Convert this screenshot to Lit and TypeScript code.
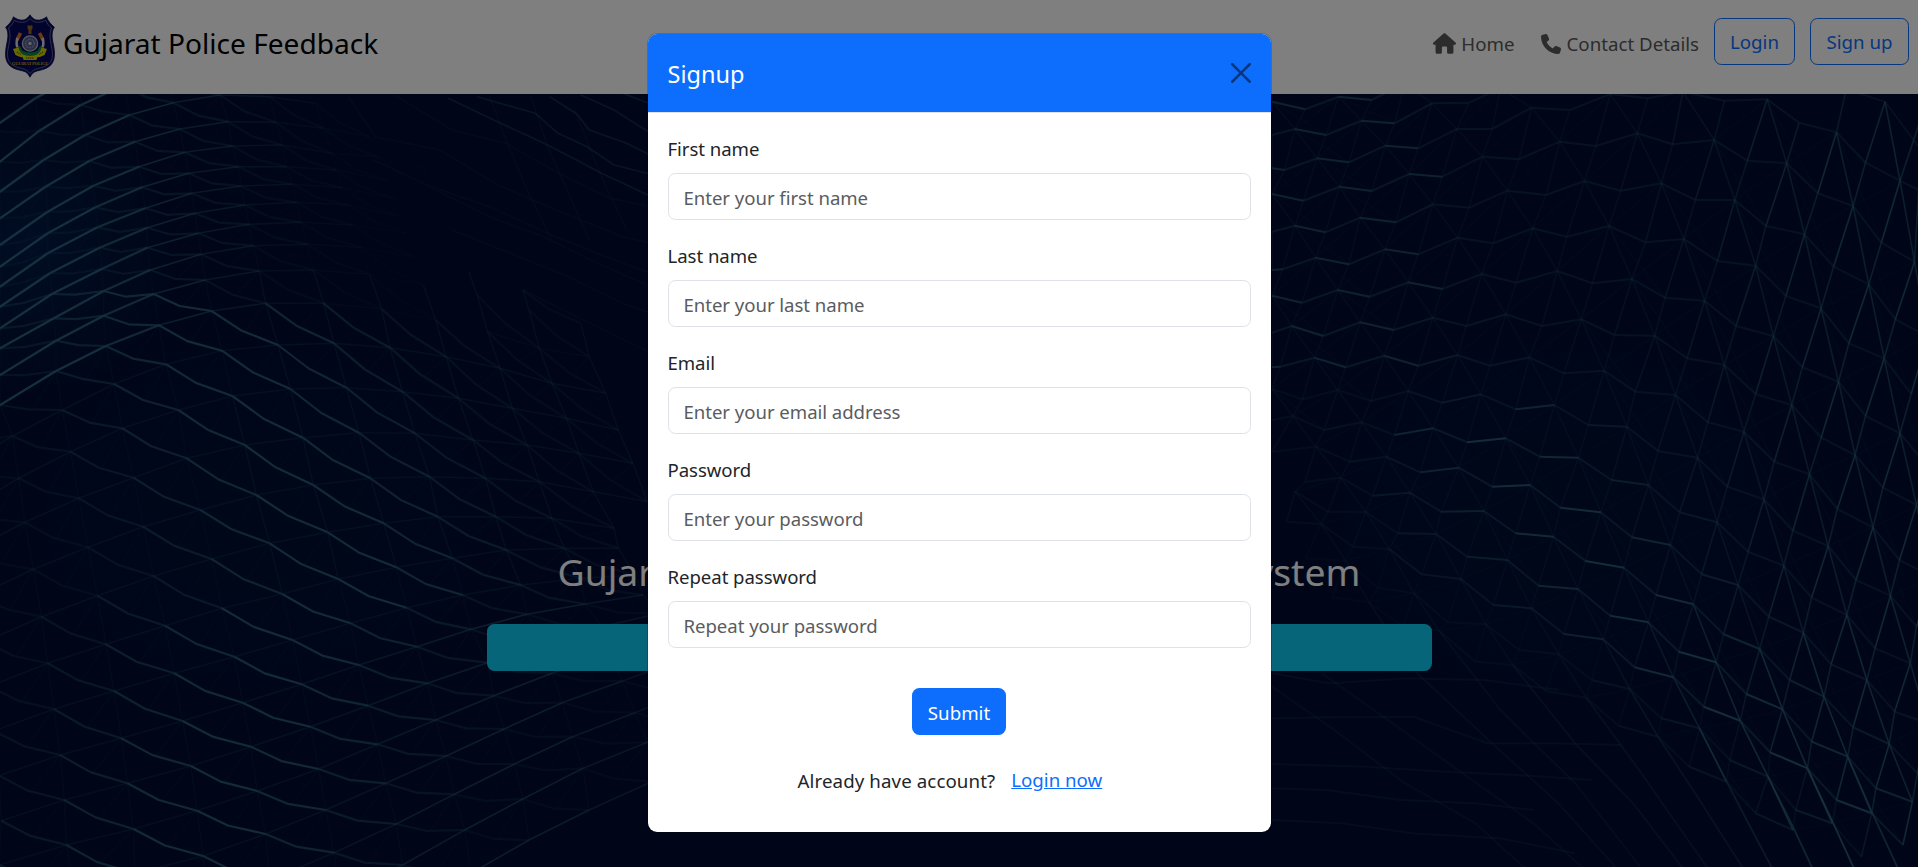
import { LitElement, html, svg, css } from "lit";
import { customElement, property } from "lit/decorators.js";

type Pt = [number, number];

/* Mesh vertices are written in a compact grid unit: 2.41 per px across, 3 per px down. */
const U = 2.41;
const V = 3;
const pairs = (s: string): Pt[] =>
  s.trim().split(/\s+/).map((p) => p.split(",").map(Number) as Pt);

const ARCS: Pt[][] = [
  "-25,120 85,25 190,-45 290,-95",
  "0,215 95,122 195,45 300,-15 405,-40",
  "0,305 105,210 205,135 312,75 418,38 530,15 650,20 760,40",
  "0,385 110,290 215,213 325,155 433,117 550,95 665,97 780,115 890,140 1010,180",
  "0,465 115,365 225,287 335,230 445,187 560,168 680,165 800,190 910,200 1030,240",
  "0,530 115,430 230,352 342,292 455,250 575,230 690,230 810,240 930,270 1050,300",
  "0,590 115,490 235,412 350,355 462,310 580,288 705,283 825,293 950,325 1070,360",
  "0,650 120,550 240,473 355,413 470,370 590,345 715,337 840,345 965,380 1090,420",
  "0,715 125,612 245,537 355,473 478,430 600,403 725,397 850,405 980,430 1110,480",
  "0,775 130,685 250,603 362,540 485,493 610,467 740,463 870,472 1000,500 1130,545 1260,600",
  "0,855 135,752 250,677 370,612 495,570 625,543 755,540 890,553 1020,585 1150,615 1275,660 1400,700",
  "0,945 135,843 255,768 383,706 510,663 640,640 780,640 920,657 1050,690 1175,725 1300,775 1420,800",
  "30,1038 150,960 275,882 400,823 535,782 670,765 805,760 940,773 1075,800 1205,835 1330,880 1460,910",
  "45,1165 170,1085 295,1015 430,960 560,918 700,897 835,893 970,905 1105,925 1235,955 1365,985 1490,1020",
  "60,1297 190,1225 322,1163 450,1105 590,1065 730,1043 865,1028 1000,1030 1140,1050 1270,1065 1395,1090 1525,1120",
  "80,1438 212,1372 345,1310 483,1260 618,1215 755,1185 893,1165 1035,1160 1170,1165 1300,1175 1430,1205 1560,1235",
  "100,1580 235,1517 370,1458 510,1407 650,1360 790,1327 925,1300 1055,1280 1195,1280 1330,1285 1480,1315",
  "115,1720 255,1663 398,1607 535,1555 680,1512 815,1467 955,1432 1090,1405 1220,1380 1360,1375 1490,1375",
  "130,1857 275,1803 420,1750 565,1700 705,1650 845,1600 980,1553 1115,1515 1255,1485 1400,1465 1530,1455",
  "145,1995 292,1945 440,1893 585,1838 727,1783 865,1725 1005,1670 1135,1618 1270,1573 1410,1542 1550,1515",
  "155,2130 307,2080 460,2028 605,1970 748,1910 887,1847 1030,1780 1175,1718 1310,1660 1450,1610 1590,1570",
  "160,2265 322,2217 475,2162 620,2103 768,2037 910,1963 1050,1890 1190,1817 1330,1750 1470,1690 1610,1640",
  "180,2400 325,2350 490,2298 640,2232 785,2160 930,2080 1075,1998 1215,1917 1355,1838 1500,1773 1640,1710",
  "190,2520 340,2480 500,2430 650,2370 805,2288 955,2202 1095,2113 1240,2022 1380,1940 1530,1868 1670,1800",
  "200,2660 350,2610 510,2560 660,2500 820,2420 970,2325 1120,2220 1260,2127 1405,2035 1560,1957 1700,1900",
  "210,2790 360,2740 520,2690 680,2630 835,2540 985,2440 1135,2350 1275,2250 1420,2160 1570,2075 1720,2010",
].map(pairs).map((a) => {
  const [p, q] = a;
  return [[2 * p[0] - q[0], 2 * p[1] - q[1] + 12] as Pt, ...a];
});

/* Ridge rows; the digit tells which parity of vertex is a crest. */
const ROWS: [number, Pt[]][] = ([
  [0, "10,35 90,58 170,20 250,30 330,-20"],
  [1, "10,135 65,117 140,135 225,92 305,100 395,40 485,38 560,-5"],
  [0, "10,235 40,240 118,205 195,217 283,167 362,175 455,117 540,117 635,53 728,60 825,12 915,25 1000,5 1100,32 1203,28 1280,98 1370,127 1440,218 1523,272 1568,300"],
  [0, "10,312 85,332 172,290 250,303 340,252 420,260 517,200 605,208 703,155 790,168 890,130 975,163 1075,150 1155,212 1250,220 1325,310 1410,348 1478,458 1558,515"],
  [1, "10,425 65,407 138,427 222,383 308,397 397,343 485,353 577,302 670,315 763,273 850,302 948,280 1030,330 1125,330 1200,408 1293,433 1363,530 1448,583 1512,688 1590,740"],
  [0, "10,540 35,538 115,503 195,523 282,478 362,493 457,443 543,460 638,415 720,440 822,408 910,457 1002,447 1083,513 1175,527 1248,618 1333,655 1400,760 1485,805 1550,912"],
  [0, "10,617 82,638 168,600 245,620 338,577 420,597 515,552 598,578 697,543 782,580 877,567 957,623 1052,632 1128,708 1218,738 1288,832 1375,875 1440,978 1523,1030 1590,1130"],
  [1, "10,728 57,708 133,738 222,697 303,720 397,683 478,708 573,673 660,708 755,688 835,735 932,737 1010,805 1100,825 1175,912 1262,945 1333,1043 1415,1095 1482,1193 1563,1245"],
  [0, "10,832 30,830 112,803 187,832 280,797 362,827 457,795 535,827 630,802 713,850 810,842 885,905 982,915 1060,997 1147,1025 1220,1115 1305,1153 1372,1257 1458,1312 1522,1410 1600,1460"],
  [0, "10,897 83,928 168,900 248,933 338,903 420,938 513,913 597,958 690,945 772,1005 865,1010 940,1083 1035,1103 1107,1190 1195,1228 1265,1322 1350,1368 1417,1470 1500,1517 1563,1610"],
  [1, "10,990 60,978 135,1020 225,997 305,1035 398,1015 480,1057 573,1045 655,1100 748,1103 828,1170 917,1185 992,1267 1082,1297 1157,1385 1243,1427 1310,1523 1395,1575 1463,1675 1548,1720"],
  [1, "10,1085 115,1070 197,1115 285,1100 367,1147 460,1133 540,1190 632,1185 705,1253 802,1267 877,1342 970,1365 1045,1453 1133,1485 1207,1580 1290,1628 1357,1723 1443,1770 1510,1865 1590,1900"],
  [1, "90,1175 175,1163 252,1217 342,1208 417,1265 520,1263 597,1330 688,1340 765,1413 858,1433 935,1515 1025,1543 1098,1633 1185,1677 1257,1770 1340,1820 1410,1912 1497,1962 1565,2050"],
  [0, "65,1205 145,1265 235,1265 313,1330 405,1332 480,1400 577,1410 652,1487 747,1497 825,1577 917,1597 990,1685 1080,1717 1153,1812 1240,1858 1310,1955 1397,2000 1465,2095 1553,2135"],
  [1, "45,1295 128,1302 205,1370 292,1377 370,1453 465,1467 543,1545 635,1555 713,1632 808,1648 883,1732 977,1762 1050,1850 1138,1892 1210,1987 1300,2035 1370,2130 1455,2170 1530,2265"],
  [1, "90,1405 187,1412 265,1493 352,1510 432,1597 525,1603 605,1680 700,1692 780,1770 872,1797 948,1885 1040,1915 1113,2010 1205,2060 1272,2160 1360,2200 1430,2300"],
  [1, "155,1522 243,1537 325,1610 412,1622 500,1715 590,1725 670,1803 767,1823 845,1907 940,1940 1015,2030 1105,2075 1175,2170 1265,2220"],
] as [number, string][]).map(([k, s]) => [k, pairs(s)]);

const EXTRA_LEFT = [
  "1325,20 1390,72 1420,120 1510,160 1575,200",
  "1150,20 1290,70 1345,130 1415,170 1480,225 1575,255",
  "1400,15 1480,60 1575,135",
  "1080,25 1190,90 1320,165 1450,250 1570,320",
  "1500,10 1575,45",
].map(pairs);

const FAINT_LEFT = [
  "950,15 1090,120 1220,160 1340,245 1470,325 1570,350",
  "840,20 905,140 1060,180 1200,285 1340,360 1500,440 1570,460",
  "1180,20 1220,150 1270,300 1330,450",
  "1280,20 1320,170 1370,310 1420,450",
  "1385,60 1420,170 1460,290 1510,420",
  "900,210 1040,290 1180,350 1320,430 1460,500 1570,550",
  "1050,300 1180,380 1310,440 1440,520 1570,590",
  "1090,420 1230,490 1370,560 1500,640 1570,670",
  "1260,600 1390,680 1520,760 1570,790",
].map(pairs);

const EXTRA_RIGHT: [number, Pt[]][] = ([
  [0.5, "1040,1915 1120,2110 1215,2335"],
  [0.8, "1205,2060 1265,2210 1312,2335"],
  [1, "1300,2035 1355,2180 1412,2335"],
  [0.75, "1397,2000 1455,2165 1518,2335"],
  [0.3, "940,1940 1040,2130 1145,2335"],
  [0.25, "767,1823 900,2050 1060,2335"],
  [0.25, "590,1725 740,1960 880,2140 1000,2335"],
  [0.2, "412,1622 560,1860 740,2080 900,2335"],
  [0.2, "243,1537 360,1750 540,1960 700,2140 840,2335"],
  [0.18, "130,1750 300,1900 480,2060 640,2200 760,2335"],
  [0.18, "10,1790 160,1920 330,2080 500,2200 620,2335"],
  [0.2, "10,1750 150,1780 330,1765 520,1770 700,1800"],
  [0.2, "10,1885 130,1882 350,1880 530,1960 700,1960 850,1965"],
  [0.2, "10,2022 230,2030 420,2045 600,2055 780,2070"],
  [0.2, "10,2095 140,2100 320,2130 500,2140 640,2160"],
  [0.2, "10,2190 180,2200 350,2230 560,2245 740,2290"],
] as [number, string][]).map(([k, s]) => [k, pairs(s)]);

const bump = (d: number, w: number) => Math.exp(-(d * d) / (w * w));
const seg = (pts: Pt[], ox: number, o: number, w = 1.5) => {
  if (o < 0.02) return null;
  const d = pts.map(([x, y], i) => `${i ? "L" : "M"}${(ox + x / U).toFixed(1)} ${(y / V - 4).toFixed(1)}`).join("");
  return svg`<path d=${d} stroke-width=${w} stroke-opacity=${Math.min(o, 1).toFixed(2)}></path>`;
};

const leftMesh = () => {
  const out: unknown[] = [];
  ARCS.forEach((a, r) => {
    for (let i = 0; i < a.length; i++) {
      const [x, y] = a[i];
      const n = a[i + 1];
      const upper = r < 12;
      const dim = y < 700 ? bump(Math.max(0, x - 450), 420) : 1;
      if (n) {
        const fade = upper
          ? 0.85 * bump(Math.max(0, x - 60), 400) + 0.1 * dim
          : 0.2 + 0.32 * bump(x - 1150, 330) * (r > 18 ? 1 : 0);
        out.push(seg([a[i], n], 0, fade, upper && x < 300 ? 2.3 : 1.6));
      }
      const b = ARCS[r + 1];
      if (b && b[i + 1]) {
        const q = b[i + 1];
        const mid: Pt = [x + (q[0] - x) * 0.45, y + (q[1] - y) * 0.45 + (upper && x < 200 ? 6 : 13)];
        const ridge = 470 + (y - 750) * 0.42;
        const o = upper && y < 600
          ? (0.12 + 0.2 * bump(x - 330, 230)) * dim
          : 0.12 + 0.72 * bump(x - (y > 1500 ? 620 - (y - 1500) * 0.3 : ridge), 420);
        out.push(seg([a[i], mid, q], 0, o, 2.2));
      }
      if (b && b[i]) out.push(seg([a[i], b[i]], 0, x > 550 && y < 1400 && y > 500 ? 0.2 : 0.1 * dim, 1.4));
      if (b && b[i + 1] && n) {
        const q = b[i + 1];
        out.push(seg([[(x + q[0]) / 2, (y + q[1]) / 2 + 10], n], 0, 0.07 * dim, 1.3));
      }
    }
  });
  EXTRA_LEFT.forEach((l) => out.push(seg(l, 0, 0.34, 1.7)));
  FAINT_LEFT.forEach((l) => out.push(seg(l, 0, 0.11, 1.6)));
  return out;
};

const link = (a: Pt[], pa: number, b: Pt[], pb: number, dx: (y: number) => number, o: (p: Pt) => number) =>
  a.map((p, i) => {
    if (i % 2 !== pa) return null;
    let best: Pt | null = null;
    b.forEach((q, j) => {
      if (j % 2 !== pb) return;
      const e = Math.abs(q[0] - p[0] - dx(p[1]));
      if (e < 32 && (!best || e < Math.abs(best[0] - p[0] - dx(p[1])))) best = q;
    });
    return best ? seg([p, best], 1268, o(p), 1.6) : null;
  });

const rightMesh = () => {
  const out: unknown[] = [];
  ROWS.forEach(([k, row], r) => {
    row.forEach((p, i) => {
      const n = row[i + 1];
      if (!n) return;
      const flat = i % 2 === k;
      const early = p[0] < 350 && r < 9;
      const diag = bump(p[0] - (560 + (p[1] - 1150) * 0.75), 260) * (p[1] > 950 ? 1 : 0.2);
      const low = r > 8 && p[0] < 250 ? 0.6 : 1;
      const o = early
        ? (flat ? 0.62 : 0.36)
        : (flat ? 0.28 : 0.26) + (flat ? 0.12 : 0.6) * diag;
      out.push(seg([p, n], 1268, o * low * (r > 14 ? 0.5 : 1), 2));
    });
    const next = ROWS[r + 1];
    if (!next) return;
    const [kb, b] = next;
    const east = (p: Pt) => bump(Math.max(0, 1500 - p[0]), 420);
    const fade = r > 13 ? 0.5 : 1;
    out.push(link(row, k, b, kb, (y) => 50 + Math.max(0, y - 1200) * 0.018, (p) => 0.14 + 0.4 * east(p) + 0.4 * bump(p[0] - 1150, 260) * (p[1] > 1500 ? 1 : 0)));
    out.push(link(row, k, b, 1 - kb, () => -35, (p) => (0.15 + 0.6 * east(p)) * fade));
    out.push(link(row, 1 - k, b, kb, () => -22, (p) => (0.14 + 0.4 * east(p)) * fade));
    out.push(link(row, k, b, 1 - kb, () => 105, () => 0.06));
    out.push(link(row, k, b, kb, () => -110, () => 0.06));
  });
  out.push(seg([[1487, 35], [1523, 272]], 1268, 0.6, 1.6), seg([[1487, 35], [1440, 218]], 1268, 0.6, 1.6));
  out.push(seg([[1370, 127], [1395, -10]], 1268, 0.4, 1.6), seg([[1487, 35], [1410, 5]], 1268, 0.25, 1.6));
  out.push(seg([[1487, 35], [1568, 170]], 1268, 0.25, 1.6), seg([[1523, 272], [1575, 80]], 1268, 0.55, 1.6));
  EXTRA_RIGHT.forEach(([o, l]) => out.push(seg(l, 1268, o * 0.85, 1.8)));
  return out;
};

@customElement("mesh-backdrop")
export class MeshBackdrop extends LitElement {
  static styles = css`
    :host { display: block; width: 100%; height: 100%; }
    svg { display: block; width: 100%; height: 100%; }
  `;
  render() {
    return html`<svg viewBox="0 0 1918 773" preserveAspectRatio="none" fill="none" stroke="#2f6480" stroke-linejoin="round">
      <defs>
        <radialGradient id="glow"><stop offset="0" stop-color="#04295a" stop-opacity=".5" /><stop offset="1" stop-color="#04295a" stop-opacity="0" /></radialGradient>
      </defs>
      <g stroke="none">
        <ellipse cx="30" cy="150" rx="150" ry="150" fill="url(#glow)" />
        <ellipse cx="260" cy="420" rx="420" ry="330" fill="url(#glow)" opacity=".18" />
        <ellipse cx="1560" cy="420" rx="420" ry="330" fill="url(#glow)" opacity=".18" />
      </g>
      ${leftMesh()}${rightMesh()}
    </svg>`;
  }
}

@customElement("police-crest")
export class PoliceCrest extends LitElement {
  static styles = css`
    :host { display: block; width: 50px; height: 64px; }
    svg { display: block; }
    .motto { font: 700 3.9px "Liberation Serif", serif; fill: #c9b400; }
  `;
  render() {
    return html`<svg width="50" height="64" viewBox="0 0 50 64">
      <path d="M25 .8C27.5 5 30.5 6.6 34.5 6C38 5.5 40 4 41.5 2.8C43 7 46 10.500 49.400 13.200C46 18 47 24 48.500 31C50 39 50 45 47 49.500C44.500 53.500 39 55.500 34 56.500C29 57.500 27 59.500 25 63.200C23 59.500 21 57.500 16 56.500C11 55.500 5.500 53.500 3 49.500C0 45 0 39 1.500 31C3 24 4 18 .6 13.200C4 10.500 7 7 8.500 2.800C10 4 12 5.500 15.500 6C19.500 6.600 22.500 5 25 .8Z" fill="#07095a" stroke="#10124e" stroke-width=".8"/>
      <path d="M25 4.500C28 8 31 8.600 35 8.200C37.500 7.800 39.500 7 40.700 6.200C42 9.500 44 12 46.700 14C44 19 45 25 46.300 31.500C48 39 48 44.500 45.300 48.300C43 51.500 38 53.500 33.500 54.400C29 55.300 27 57 25 59.500C23 57 21 55.300 16.500 54.400C12 53.500 7 51.500 4.700 48.300C2 44.500 2 39 3.700 31.500C5 25 6 19 3.300 14C6 12 8 9.500 9.300 6.200C10.500 7 12.500 7.800 15 8.200C19 8.600 22 8 25 4.500Z" fill="none" stroke="#7175a5" stroke-width=".8"/>
      <path d="M15.500 19L12 26M34.500 19L38 26" stroke="#e07020" stroke-width="3.600"/>
      <path d="M12.500 24Q10 31 14.500 37M37.500 24Q40 31 35.500 37" fill="none" stroke="#d4d6da" stroke-width="2.600"/>
      <path d="M13 33Q17 43 25 43T37 33" fill="none" stroke="#128742" stroke-width="4.600"/>
      <path d="M22.500 11.500h5v3l-1 1.500v4h-3v-4l-1-1.500z" fill="#99691f"/>
      <circle cx="25" cy="29.500" r="7.600" fill="#5a5e8e" stroke="#b6b9ca" stroke-width="1.300"/>
      <circle cx="25" cy="29.500" r="4.300" fill="none" stroke="#9ea4c8" stroke-width="1.300" stroke-dasharray="1 .8"/>
      <circle cx="25" cy="29.500" r="1.700" fill="#c6c9d8"/>
      <path d="M8 35L13.500 33.500Q14.500 39 19 40.500Q25 42 31 40.500Q35.500 39 36.500 33.500L42 35L39.500 41Q35 43 32 43.500L31.500 46H18.500L18 43.500Q15 43 10.500 41Z" fill="#d5d200"/>
      <path d="M17.500 38.500Q25 42 32.500 38.500" fill="none" stroke="#128742" stroke-width="3.500"/>
      <path d="M12 38l4 2.500M38 38l-4 2.500M21 44h8" stroke="#5d6416" stroke-width="1.300" stroke-dasharray="1.200 .7"/>
      <text class="motto" x="25" y="51" text-anchor="middle" textLength="36" lengthAdjust="spacingAndGlyphs">GUJARAT POLICE</text>
    </svg>`;
  }
}

@customElement("form-field")
export class FormField extends LitElement {
  @property() label = "";
  @property() hint = "";
  @property() type = "text";
  static styles = css`
    :host { display: block; height: 107px; }
    label { display: block; height: 29px; line-height: 30px; padding-top: 1px; margin-bottom: 10px; color: #212529; font-size: 18.6px; letter-spacing: -0.05px; }
    input {
      box-sizing: border-box; display: block; width: 100%; height: 47px; padding: 2px 15px 0;
      border: 1px solid #dee2e6; border-radius: 7.5px; background: #fff;
      font: inherit; font-size: 18.6px; letter-spacing: -0.04px; color: #212529;
    }
    input::placeholder { color: #595c5f; opacity: 1; }
  `;
  render() {
    return html`<label>${this.label}</label><input type=${this.type} placeholder=${this.hint} />`;
  }
}

@customElement("app-root")
export class AppRoot extends LitElement {
  static styles = css`
    :host {
      display: block; position: relative; height: 867px; overflow: hidden;
      font-family: "Noto Sans", "Open Sans", sans-serif; font-size: 18.7px; line-height: 30px; color: #212529;
    }
    .page { display: flex; flex-direction: column; height: 100%; }
    .nav { box-sizing: border-box; height: 94px; background: #fff; display: flex; align-items: center; padding: 0 9px 0 5px; flex: none; }
    .crest { margin: -2px 8px 0 0; }
    .brand { color: #000; font-size: 28.1px; line-height: 44px; flex: 1; margin-top: -9px; }
    .link { display: flex; align-items: center; color: #595959; margin-top: -6px; }
    .link svg { fill: #595959; flex: none; }
    .home { gap: 5px; margin-right: 26px; }
    .home svg { margin-top: -1px; }
    .contact { gap: 6px; margin-right: 15px; }
    button { font: inherit; box-sizing: border-box; height: 47px; border-radius: 7.5px; padding: 1px 0 0; }
    .outline { border: 1px solid #0d6efd; color: #0d6efd; background: none; margin-top: -11px; }
    .login { width: 81px; margin-right: 15px; }
    .signup { width: 99px; }
    .hero { flex: 1; position: relative; background: #000c30; display: grid; }
    .mesh { grid-area: 1 / 1; min-height: 0; }
    .pitch { grid-area: 1 / 1; z-index: 1; display: flex; flex-direction: column; align-items: center; padding-top: 448px; }
    .title { width: 803px; display: flex; justify-content: space-between; margin: 0; font-weight: 400; font-size: 37.3px; line-height: 60px; color: #fff; }
    .bar { width: 945px; height: 47px; margin-top: 22px; border-radius: 7.5px; background: #0dcaf0; }
    .shade { position: absolute; inset: 0; z-index: 2; background: rgba(0, 0, 0, 0.5); display: flex; justify-content: center; align-items: flex-start; padding-top: 33px; box-sizing: border-box; }
    .modal { box-sizing: border-box; width: 625px; height: 800px; border: 1px solid rgba(0, 0, 0, 0.175); border-radius: 10px; background: #fff; background-clip: padding-box; overflow: hidden; }
    .head { box-sizing: border-box; height: 79px; background: #0d6efd; border-bottom: 1px solid #dee2e6; padding: 2px 20px 0; display: flex; align-items: center; justify-content: space-between; color: #fff; }
    .name { font-size: 23.5px; margin: 0; font-weight: 400; }
    .close { display: block; margin-top: -2px; }
    .body { padding: 20px; display: flex; flex-direction: column; }
    .submit { align-self: center; width: 94px; margin-top: 20px; border: 0; background: #0d6efd; color: #fff; padding-top: 2px; }
    .foot { display: flex; gap: 16px; margin: 31px 0 0 130px; white-space: nowrap; letter-spacing: 0.1px; }
    .now { color: #0d6efd; text-decoration: underline; margin-top: -1px; letter-spacing: 0; }
  `;

  render() {
    const title = "Gujarat Police Station Feedback System";
    return html`
      <div class="page">
        <header class="nav">
          <police-crest class="crest"></police-crest>
          <span class="brand">Gujarat Police Feedback</span>
          <a class="link home">
            <svg width="23" height="21" viewBox="0 0 576 512"><path d="M575.800 255.500c0 18-15 32.100-32 32.100h-32l.7 160.200c0 2.700-.2 5.400-.5 8.100V472c0 22.100-17.900 40-40 40H392c-22.100 0-40-17.900-40-40V360c0-17.700-14.300-32-32-32H256c-17.700 0-32 14.300-32 32v112c0 22.100-17.900 40-40 40H104c-22.100 0-40-17.900-40-40V287.600H32c-18 0-32-14-32-32.100c0-9 3-17 10-24L266.400 8c7-7 15-8 22-8s15 2 21 7L564.800 231.500c8 7 12 15 11 24z"/></svg>
            <span>Home</span>
          </a>
          <a class="link contact">
            <svg width="20" height="20" viewBox="0 0 512 512"><path d="M164.900 24.600c-7.700-18.600-28-28.500-47.400-23.200l-88 24C12.100 30.200 0 46 0 64C0 311.400 200.600 512 448 512c18 0 33.800-12.100 38.600-29.500l24-88c5.300-19.400-4.600-39.700-23.200-47.400l-96-40c-16.300-6.800-35.200-2.100-46.300 11.600L304.700 368C234.300 334.700 177.300 277.700 144 207.300L193.300 167c13.700-11.200 18.400-30 11.600-46.300l-40-96z"/></svg>
            <span>Contact Details</span>
          </a>
          <button class="outline login">Login</button>
          <button class="outline signup">Sign up</button>
        </header>
        <main class="hero">
          <mesh-backdrop class="mesh"></mesh-backdrop>
          <div class="pitch">
            <h1 class="title">${title.split(" ").map((w) => html`<span>${w}</span>`)}</h1>
            <div class="bar"></div>
          </div>
        </main>
      </div>
      <div class="shade">
        <section class="modal">
          <div class="head">
            <h2 class="name">Signup</h2>
            <svg class="close" width="20" height="20" viewBox="0 0 16 16" fill="#000" opacity=".5"><path d="M.293.293a1 1 0 0 1 1.414 0L8 6.586 14.293.293a1 1 0 1 1 1.414 1.414L9.414 8l6.293 6.293a1 1 0 0 1-1.414 1.414L8 9.414l-6.293 6.293a1 1 0 0 1-1.414-1.414L6.586 8 .293 1.707a1 1 0 0 1 0-1.414"/></svg>
          </div>
          <div class="body">
            <form-field label="First name" hint="Enter your first name"></form-field>
            <form-field label="Last name" hint="Enter your last name"></form-field>
            <form-field label="Email" hint="Enter your email address"></form-field>
            <form-field label="Password" hint="Enter your password" type="password"></form-field>
            <form-field label="Repeat password" hint="Repeat your password" type="password"></form-field>
            <button class="submit">Submit</button>
            <div class="foot"><span>Already have account?</span><a class="now">Login now</a></div>
          </div>
        </section>
      </div>
    `;
  }
}
